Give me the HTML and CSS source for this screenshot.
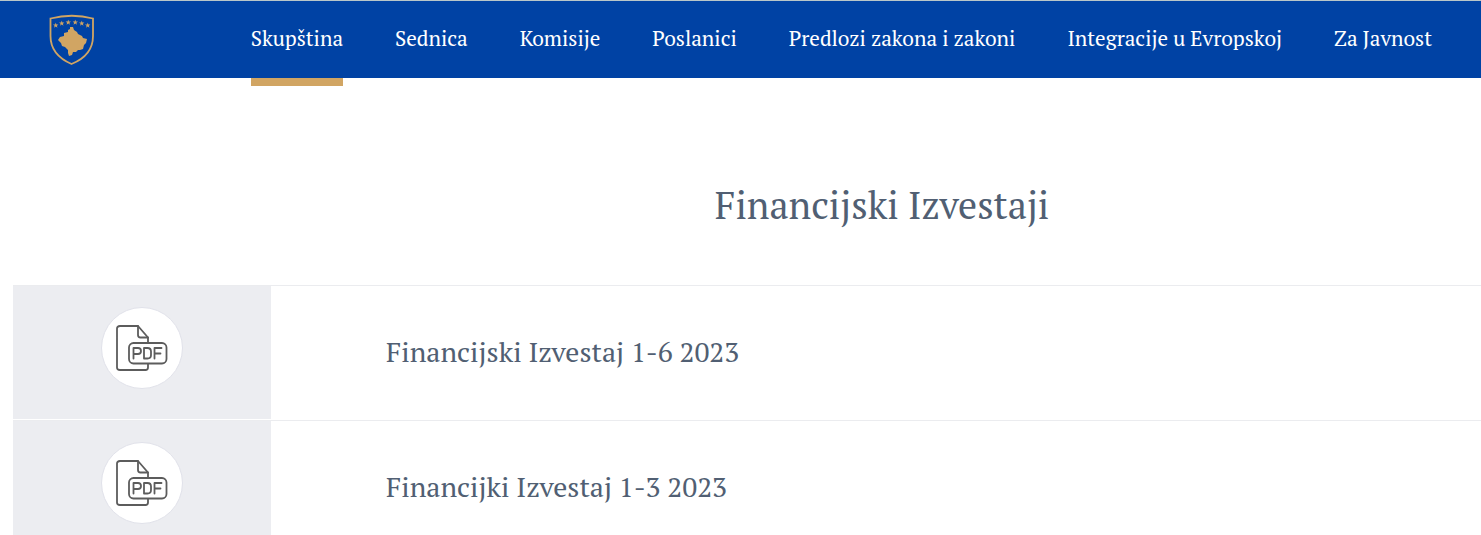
FILE: index.html
```html
<!DOCTYPE html>
<html lang="sr-Latn">
<head>
    <meta charset="UTF-8">
    <meta name="viewport" content="width=device-width, initial-scale=1.0">
    <title>Financijski Izvestaji</title>
    <link rel="stylesheet" href="styles.css">
</head>
<body>

    <!-- Shared shapes -->
    <svg class="sprite" aria-hidden="true">
        <symbol id="star" viewBox="0 0 10 10">
            <path d="M5 0l1.2 3.6H10L7 5.9 8.100 9.600 5 7.400 1.900 9.600 3 5.900 0 3.600h3.800z"/>
        </symbol>
        <symbol id="pdf" viewBox="0 0 52 48">
            <g fill="none" stroke="#5c5c5c" stroke-width="1.800" stroke-linejoin="round" stroke-linecap="round">
                <path d="M32 18V13.500L22 2H4Q1 2 1 4.500V43.500Q1 46 4 46H29.500Q32 46 32 43.500V40"/>
                <path d="M22 2V11Q22 13.500 24.500 13.500H32"/>
                <rect x="13" y="19" width="37.500" height="20.500" rx="4.500"/>
                <path d="M17.500 34.500V24H22Q25 24 25 27T22 30H17.500"/>
                <path d="M28 24V34.500H31.500Q35 34.500 35 31V27.500Q35 24 31.500 24Z"/>
                <path d="M38.500 34.500V24H45.500M38.500 29.500H44.500"/>
            </g>
        </symbol>
    </svg>

    <header class="header">
        <a class="logo" href="#" aria-label="Skupština">
            <svg width="46" height="52" viewBox="0 0 46 52" fill="#d1a563">
                <path d="M1.500 4.500Q23-1 44 4.500V22C44 36 35 45 22.500 50 11 45 1.500 36 1.500 22Z" fill="none" stroke="#d1a563" stroke-width="1.800"/>
                <use href="#star" x="4" y="8.500" width="5.500" height="5.500"/>
                <use href="#star" x="10" y="6.500" width="5.500" height="5.500"/>
                <use href="#star" x="16.500" y="5.500" width="5.500" height="5.500"/>
                <use href="#star" x="23.500" y="5.500" width="5.500" height="5.500"/>
                <use href="#star" x="30" y="6.500" width="5.500" height="5.500"/>
                <use href="#star" x="36" y="8.500" width="5.500" height="5.500"/>
                <path d="M21 13l3 0 1 3 3 2 1 2 4 2 1 2 4 1-1 4-2 2-1 4-3 1-2 0-2 2-3 0-1 3-3 1-1-3 0-3-3-3-3-1-1-3-3-3 2-3 4-1 0-3 4-1 0-2 2-1z"/>
            </svg>
        </a>
        <nav class="nav">
            <a class="nav-link active" href="#">Skupština</a>
            <a class="nav-link" href="#">Sednica</a>
            <a class="nav-link" href="#">Komisije</a>
            <a class="nav-link" href="#">Poslanici</a>
            <a class="nav-link" href="#">Predlozi zakona i zakoni</a>
            <a class="nav-link" href="#">Integracije u Evropskoj</a>
            <a class="nav-link" href="#">Za Javnost</a>
        </nav>
    </header>

    <main class="content">
        <h1 class="title">Financijski Izvestaji</h1>

        <ul class="reports">
            <li>
                <a class="report" href="#">
                    <span class="report-thumb">
                        <span class="report-icon"><svg width="52" height="48"><use href="#pdf"/></svg></span>
                    </span>
                    <span class="report-name">Financijski Izvestaj 1-6 2023</span>
                </a>
            </li>
            <li>
                <a class="report" href="#">
                    <span class="report-thumb">
                        <span class="report-icon"><svg width="52" height="48"><use href="#pdf"/></svg></span>
                    </span>
                    <span class="report-name">Financijki Izvestaj 1-3 2023</span>
                </a>
            </li>
        </ul>
    </main>

</body>
</html>
```
FILE: styles.css
```css
* {
    margin: 0;
    padding: 0;
    box-sizing: border-box;
}

body {
    height: 100vh;
    overflow: hidden;
    background: #fff;
    color: #515f73;
    font-family: "PT Serif", "Liberation Serif", serif;
}

a {
    color: inherit;
    text-decoration: none;
}

.sprite {
    position: absolute;
    width: 0;
    height: 0;
}

/* Header */
.header {
    display: flex;
    justify-content: space-between;
    height: 78px;
    padding: 0 49px;
    background: #0042a4;
    border-top: 1px solid #b9c6c9;
    color: #fff;
}

.logo {
    display: flex;
    align-items: center;
}

.logo svg {
    display: block;
}

.nav {
    display: flex;
    gap: 52px;
}

.nav-link {
    position: relative;
    display: flex;
    align-items: center;
    padding-bottom: 4px;
    font-size: 21px;
    line-height: 32px;
    white-space: nowrap;
}

.nav-link.active::after {
    content: "";
    position: absolute;
    top: 100%;
    left: 0;
    width: 100%;
    height: 8px;
    background: #d1a563;
}

/* Title */
.title {
    padding: 99px 0 52px 283px;
    font-size: 38px;
    font-weight: 400;
    line-height: 56px;
    text-align: center;
}

/* Reports list */
.reports {
    padding-left: 13px;
    list-style: none;
}

.report {
    display: flex;
    border-top: 1px solid #ebecef;
}

.report-thumb {
    display: flex;
    flex: none;
    justify-content: center;
    width: 258px;
    margin-bottom: 1px;
    padding: 21px 0 30px;
    background: #ecedf1;
}

.report-icon {
    display: flex;
    align-items: center;
    justify-content: center;
    width: 82px;
    height: 82px;
    background: #fff;
    border: 1px solid #e1e2ea;
    border-radius: 50%;
}

.report-name {
    align-self: center;
    padding: 0 0 2px 115px;
    font-size: 28px;
    line-height: 40px;
}
```
